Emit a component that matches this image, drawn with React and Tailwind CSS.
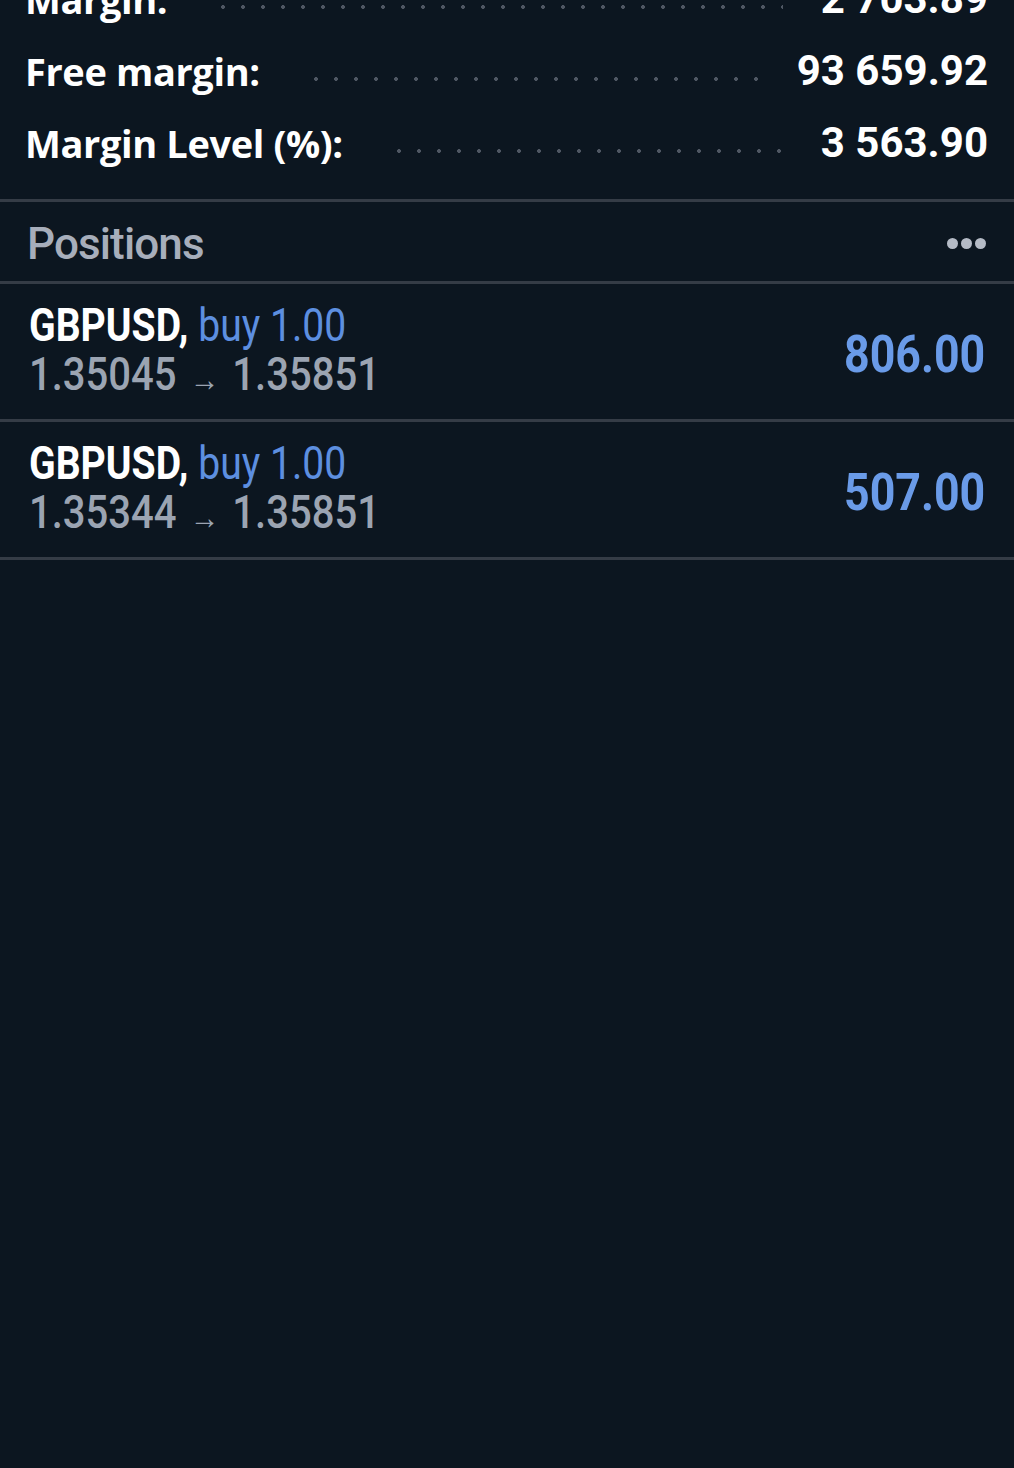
export default function App() {
  const summary = [
    { label: 'Margin:', value: '2 703.89' },
    { label: 'Free margin:', value: '93 659.92' },
    { label: 'Margin Level (%):', value: '3 563.90' },
  ]

  const positions = [
    { symbol: 'GBPUSD', side: 'buy', volume: '1.00', open: '1.35045', current: '1.35851', profit: '806.00' },
    { symbol: 'GBPUSD', side: 'buy', volume: '1.00', open: '1.35344', current: '1.35851', profit: '507.00' },
  ]

  return (
    <div className="w-[1014px] h-[1468px] overflow-hidden bg-[#0c1620] text-white">
      {/* account summary, first row cut at the top */}
      <div className="-mt-[37px] pb-[20px]">
        {summary.map(r => (
          <div key={r.label} className="h-[72px] flex items-center pl-[25px] pr-[26px]">
            <span className="font-['Open_Sans',sans-serif] font-bold text-[38px] leading-none tracking-[-0.01em] whitespace-nowrap">
              {r.label}
            </span>
            <div className="flex-1 h-[6px] mt-[16px] ml-[46px] mr-[38px] bg-[radial-gradient(circle,#4f5763_1.6px,transparent_2.2px)] bg-[length:20px_6px] bg-repeat-x" />
            <span className="font-['Roboto',sans-serif] font-bold text-[42px] leading-none whitespace-nowrap">
              {r.value}
            </span>
          </div>
        ))}
      </div>

      <div className="h-[3px] bg-[#353c46]" />

      <div className="h-[79px] flex items-center justify-between pl-[27px] pr-[28px]">
        <span className="font-['Roboto',sans-serif] font-medium text-[44px] leading-none text-[#a7aebb] tracking-[-0.02em] mt-[5px]">
          Positions
        </span>
        <div className="flex items-center gap-[3px] mt-[3px]">
          <span className="w-[11px] h-[11px] rounded-full bg-[#b5bbc6]" />
          <span className="w-[11px] h-[11px] rounded-full bg-[#b5bbc6]" />
          <span className="w-[11px] h-[11px] rounded-full bg-[#b5bbc6]" />
        </div>
      </div>

      <div className="h-[3px] bg-[#353c46]" />

      {positions.map((p, i) => (
        <div key={i}>
          <div className="h-[135px] flex items-center justify-between pl-[29px] pr-[29px] font-['Roboto',sans-serif]">
            <div className="flex flex-col">
              <div className="inline-block origin-left scale-x-[0.85] text-[46px] leading-[49px] whitespace-nowrap mt-[2px]">
                <span className="font-bold text-white">{p.symbol},</span>{' '}
                <span className="font-normal text-[#5d8fe0]">{p.side} {p.volume}</span>
              </div>
              <div className="inline-block origin-left scale-x-[0.87] text-[46px] leading-[49px] font-medium text-[#9ba4b2] whitespace-nowrap">
                {p.open}<span className="text-[34px] align-[-1px] mx-[15px]">→</span>{p.current}
              </div>
            </div>
            <span className="inline-block origin-right scale-x-[0.86] text-[52px] leading-none font-bold text-[#6a9be8] mt-[6px]">
              {p.profit}
            </span>
          </div>
          <div className="h-[3px] bg-[#353c46]" />
        </div>
      ))}
    </div>
  )
}
